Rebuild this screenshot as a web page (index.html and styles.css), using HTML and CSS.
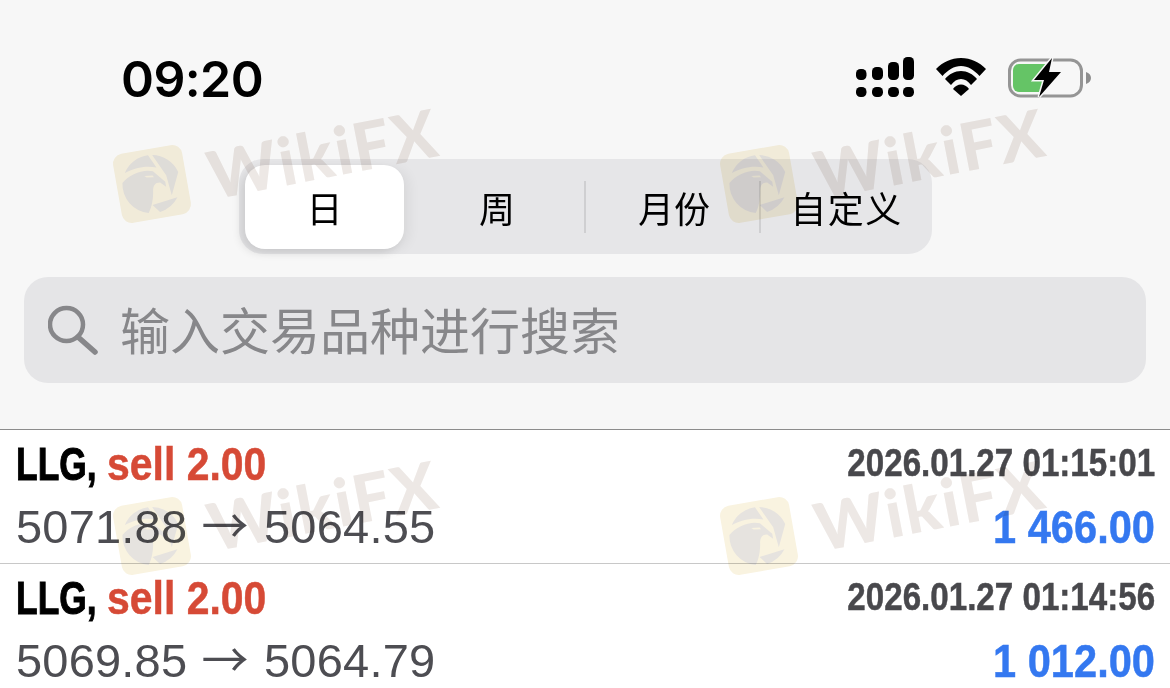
FILE: index.html
```html
<!DOCTYPE html>
<html lang="zh-CN">
<head>
    <meta charset="UTF-8">
    <meta name="viewport" content="width=device-width, initial-scale=1.0">
    <title>历史记录</title>
    <link rel="stylesheet" href="styles.css">
</head>
<body>
    <svg class="defs" width="0" height="0">
        <symbol id="eagle" viewBox="0 0 60 60">
            <g fill="#e6e3df">
                <path d="M6 15A28 28 0 0 1 31 2L37 15C26 11 15 12 6 15z"/>
                <path d="M35 2.500A28 28 0 0 1 57 23L47 44 45 24z"/>
                <path d="M27 50 52 47A28 28 0 0 1 33 58z"/>
                <path d="M2 24C10 17 24 14 33 18L43 30 43 35 38 30C33 29 31 32 30 36 29 44 26 52 22 57A28 28 0 0 1 2 24z"/>
            </g>
            <path fill="#f9f3e0" d="M24 21l8 1 1 2-7-1z"/>
        </symbol>
    </svg>

    <div class="top">
        <div class="status">
            <span class="time">09:20</span>
            <div class="status-icons">
                <svg class="signal" width="58" height="40" viewBox="0 0 58 40">
                    <rect x="0" y="12" width="10.500" height="11" rx="4.500"/>
                    <rect x="16" y="10" width="11" height="13" rx="4.500"/>
                    <rect x="32" y="5" width="11" height="18" rx="4.500"/>
                    <rect x="47" y="0" width="11" height="23" rx="4.500"/>
                    <rect x="0" y="30" width="10.500" height="10" rx="4.500"/>
                    <rect x="16" y="30" width="11" height="10" rx="4.500"/>
                    <rect x="32" y="30" width="11" height="10" rx="4.500"/>
                    <rect x="47" y="30" width="11" height="10" rx="4.500"/>
                </svg>
                <svg class="wifi" width="50" height="39" viewBox="0 0 50 39">
                    <path d="M0 11C7 4 15 0 25 0S43 4 50 11L43.500 18C38 12 32 8 25 8S12 12 6.500 18z"/>
                    <path d="M9 21C13 16 19 13 25 13S37 16 41 21L35 27C32 23 29 21 25 21S18 23 15 27z"/>
                    <path d="M17 31C19 28 22 26.500 25 26.500S31 28 33 31L25 38z"/>
                </svg>
                <svg class="battery" width="83" height="40" viewBox="0 0 83 40">
                    <rect x="1.500" y="2" width="72" height="36" rx="11" fill="none" stroke="#959595" stroke-width="3"/>
                    <path d="M11 6H38L33 34H11a6 6 0 0 1-6-6V12a6 6 0 0 1 6-6z" fill="#65c466"/>
                    <path d="M78 14c3 1 5 3 5 6s-2 5-5 6z" fill="#8e8e8e"/>
                    <path d="M44 0 26 22H36L31 39 53 14H41z" stroke="#f7f7f7" stroke-width="3" paint-order="stroke"/>
                </svg>
            </div>
        </div>

        <div class="tabs">
            <div class="tab tab-active">日</div>
            <div class="tab">周</div>
            <div class="tab tab-line">月份</div>
            <div class="tab tab-line">自定义</div>
        </div>

        <div class="search">
            <svg width="50" height="50" viewBox="0 0 50 50" fill="none" stroke="#87878a" stroke-width="4.500" stroke-linecap="round">
                <circle cx="18.500" cy="19.500" r="16.500"/>
                <path d="M30 32l17 15" stroke-width="5.500"/>
            </svg>
            <span>输入交易品种进行搜索</span>
        </div>
    </div>

    <ul class="deals">
        <li class="deal">
            <div class="deal-line line-a">
                <span class="deal-title"><span class="deal-name">LLG,</span><span class="sell">sell 2.00</span></span>
                <span class="deal-date">2026.01.27 01:15:01</span>
            </div>
            <div class="deal-line line-b">
                <span class="deal-price">5071.88 <span class="arrow">→</span> 5064.55</span>
                <span class="deal-profit">1 466.00</span>
            </div>
        </li>
        <li class="deal">
            <div class="deal-line line-a">
                <span class="deal-title"><span class="deal-name">LLG,</span><span class="sell">sell 2.00</span></span>
                <span class="deal-date">2026.01.27 01:14:56</span>
            </div>
            <div class="deal-line line-b">
                <span class="deal-price">5069.85 <span class="arrow">→</span> 5064.79</span>
                <span class="deal-profit">1 012.00</span>
            </div>
        </li>
    </ul>

    <div class="mark mark-1"><div class="mark-logo"><svg width="62" height="62"><use href="#eagle"/></svg></div><span class="mark-text">WikiFX</span></div>
    <div class="mark mark-2"><div class="mark-logo"><svg width="62" height="62"><use href="#eagle"/></svg></div><span class="mark-text">WikiFX</span></div>
    <div class="mark mark-3"><div class="mark-logo"><svg width="62" height="62"><use href="#eagle"/></svg></div><span class="mark-text">WikiFX</span></div>
    <div class="mark mark-4"><div class="mark-logo"><svg width="62" height="62"><use href="#eagle"/></svg></div><span class="mark-text">WikiFX</span></div>
</body>
</html>
```
FILE: styles.css
```css
html, body { margin: 0; padding: 0; }
body { width: 1170px; height: 688px; overflow: hidden; position: relative; background: #fff; font-family: "Liberation Sans", Arial, sans-serif; }
.defs { position: absolute; }

.top { height: 429px; background: #f7f7f7; border-bottom: 1px solid #8c8c8c; padding: 0 24px; display: flex; flex-direction: column; }
.status { height: 159px; flex: none; padding: 0 55px 0 97px; display: flex; justify-content: space-between; align-items: flex-start; }
.time { font-family: Inter, sans-serif; font-weight: 600; font-size: 50px; line-height: 60px; letter-spacing: -0.6px; margin-top: 49px; color: #000; }
.status-icons { display: flex; margin-top: 57px; }
.signal { margin-right: 22px; }
.wifi { margin-top: 1px; margin-right: 22px; }
.battery { margin-top: 1px; }

.tabs { width: 693px; height: 95px; flex: none; margin-left: 215px; box-sizing: border-box; padding: 6px; display: flex; background: #e6e6e8; border-radius: 24px; }
.tab { height: 84px; flex: none; box-sizing: border-box; display: flex; align-items: center; justify-content: center; font-family: "Noto Sans CJK SC", sans-serif; font-size: 36px; color: #000; }
.tab:nth-child(1) { width: 159px; }
.tab:nth-child(2) { width: 181px; padding-left: 5px; }
.tab:nth-child(3) { width: 175px; padding-left: 3px; }
.tab:nth-child(4) { width: 166px; padding-left: 7px; letter-spacing: 1.5px; }
.tab-active { background: #fff; border-radius: 20px; box-shadow: -5px 4px 8px rgba(0,0,0,0.1), 6px 2px 12px rgba(0,0,0,0.05); }
.tab-line { position: relative; }
.tab-line::before { content: ""; position: absolute; left: -1px; top: 16px; width: 2px; height: 52px; background: #cfcfd1; }

.search { height: 106px; flex: none; margin-top: 23px; padding-left: 24px; border-radius: 24px; background: #e5e5e7; display: flex; align-items: center; gap: 22px; }
.search svg { flex: none; }
.search span { font-family: "Noto Sans CJK SC", sans-serif; font-size: 50px; line-height: 60px; margin-top: -4px; color: #87878a; }

.deals { list-style: none; margin: 0; padding: 0; }
.deal { height: 133px; border-bottom: 1px solid #c8c8c8; padding: 0 15px 0 16px; }
.deal:last-child { border-bottom: none; }
.deal-line { display: flex; justify-content: space-between; align-items: flex-start; white-space: nowrap; }
.line-a { height: 66px; }
.line-b { height: 67px; }

/* no narrow font here, so the bold text gets squeezed */
.deal-title { display: flex; font-weight: 700; font-size: 46px; line-height: 68px; }
.deal-name { display: block; width: 91px; color: #000; transform: scaleX(0.77); transform-origin: left; -webkit-text-stroke: 1px #000; }
.sell { display: block; color: #d64a36; transform: scaleX(0.89); transform-origin: left; -webkit-text-stroke: 0.5px #d64a36; }
.deal-date { font-weight: 700; font-size: 39px; line-height: 66px; color: #48484c; transform: scaleX(0.85); transform-origin: right; -webkit-text-stroke: 0.5px #48484c; }
.deal-price { font-size: 47px; line-height: 54px; margin-top: 3.5px; letter-spacing: 0.2px; color: #4d4d52; }
.arrow { font-family: "Noto Sans CJK SC", sans-serif; font-weight: 400; line-height: 40px; margin: 0 2px 0 1px; }
.deal-profit { font-weight: 700; font-size: 47px; line-height: 54px; margin-top: 3.5px; color: #3478f0; transform: scaleX(0.885); transform-origin: right; -webkit-text-stroke: 0.5px #3478f0; }

/* watermark over everything */
.mark { position: absolute; width: 330px; height: 120px; pointer-events: none; mix-blend-mode: multiply; }
.mark-1 { left: 112px; top: 124px; }
.mark-2 { left: 719px; top: 124px; }
.mark-3 { left: 112px; top: 476px; }
.mark-4 { left: 719px; top: 476px; }
.mark-logo { position: absolute; left: 5px; top: 25px; width: 70px; height: 70px; border-radius: 10px; background: #f9f3e0; transform: rotate(-10deg); display: flex; align-items: center; justify-content: center; }
.mark-text { position: absolute; left: 94px; top: -16px; font-family: Lato, sans-serif; font-weight: 900; font-size: 66px; line-height: 90px; letter-spacing: 2px; color: #ede8e5; transform: rotate(-11deg); }
```
